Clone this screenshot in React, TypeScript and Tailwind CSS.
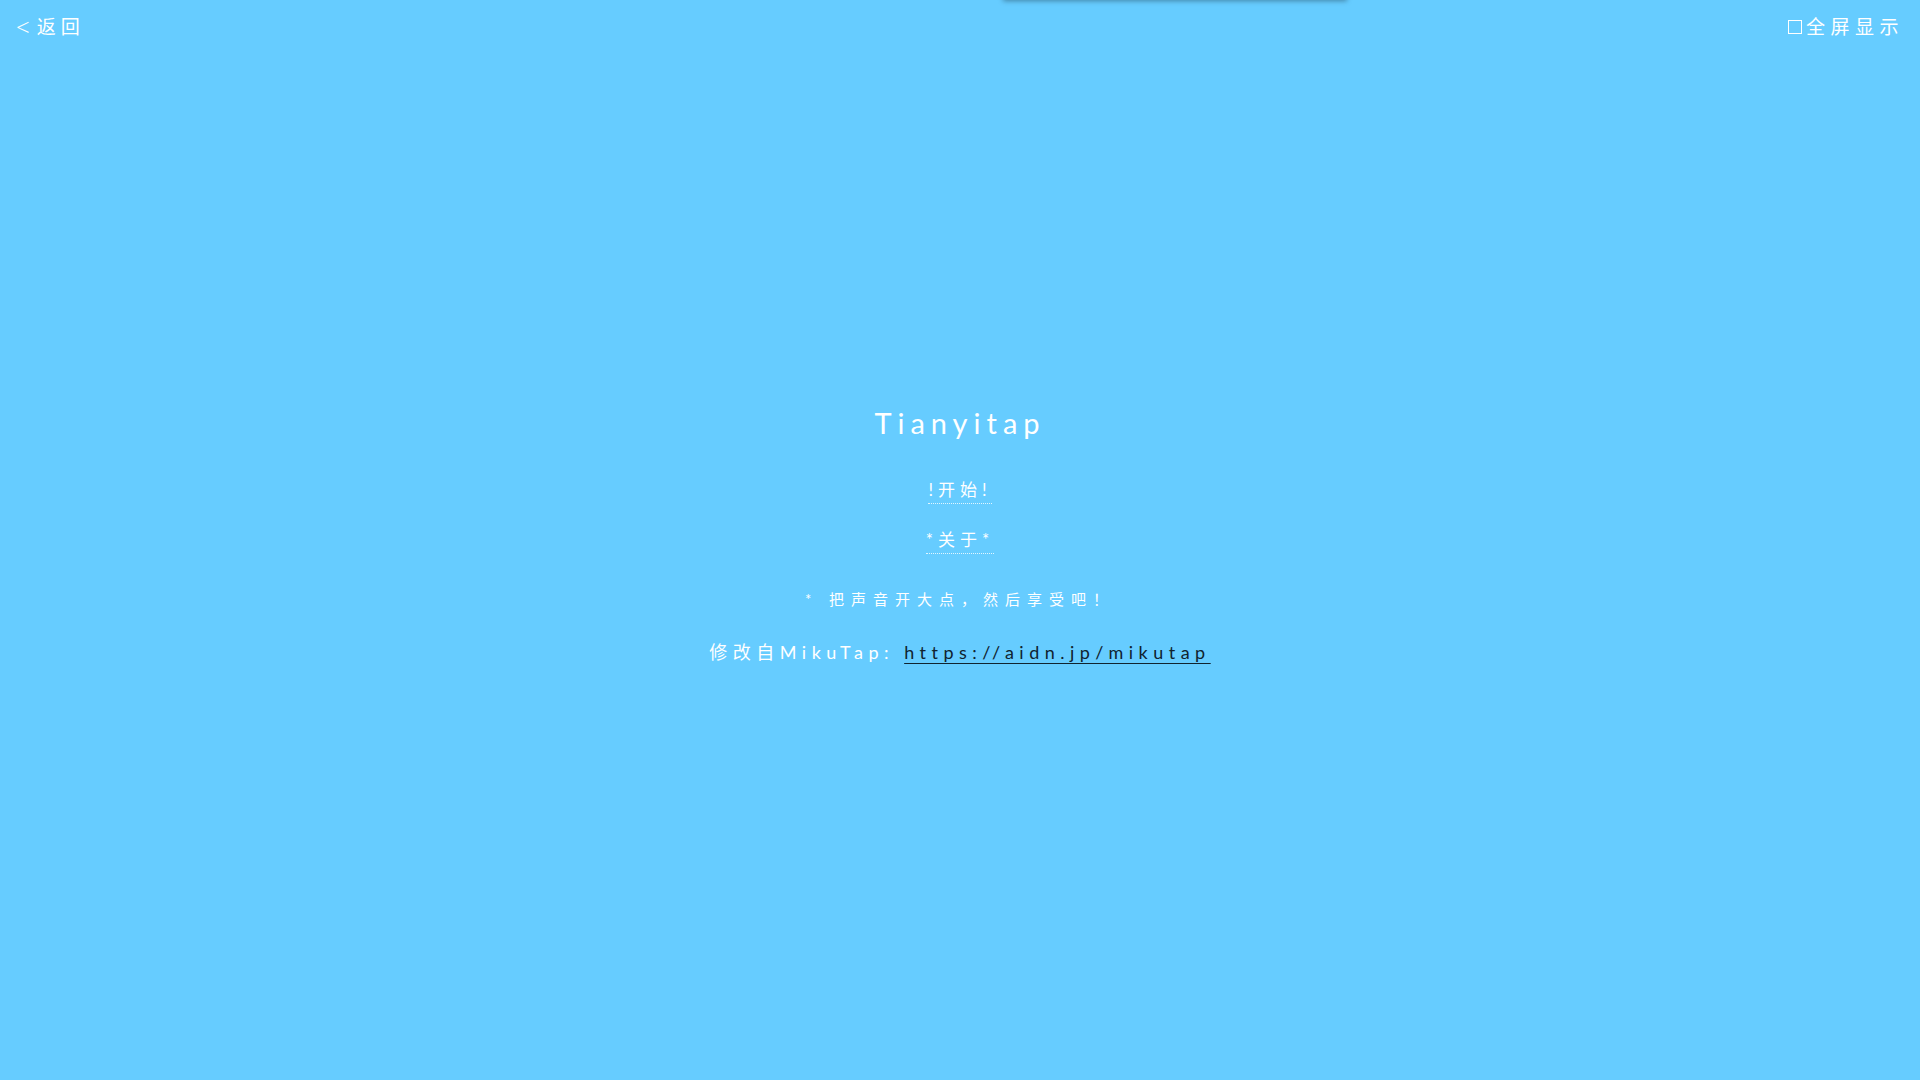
import React from "react";

export default function App() {
  return (
    <div className="relative flex h-screen w-full flex-col overflow-hidden bg-[#66ccff] font-['Lato','Noto_Sans_CJK_SC',sans-serif] text-white">
      {/* notification tray parked above the viewport, only its shadow shows */}
      <div className="absolute -top-[40px] left-[1003px] h-[40px] w-[344px] bg-[#66ccff] shadow-[0_1px_5px_rgba(0,0,0,0.35)]" />

      <header className="flex h-[54px] shrink-0 items-center justify-between px-4 text-[19px] tracking-[5px]">
        <a href="#" className="flex items-center">
          <span className="mr-[7px] font-['Open_Sans',sans-serif] text-[24px] font-light leading-none tracking-normal">
            &lt;
          </span>
          <span>返回</span>
        </a>
        <label className="flex items-center gap-[4px]">
          <span className="inline-block h-[14px] w-[14px] border border-white" />
          <span className="tracking-[5.5px]">全屏显示</span>
        </label>
      </header>

      <main className="flex flex-1 flex-col items-center justify-center pb-[66px]">
        <h1 className="text-[29px] leading-[40px] tracking-[6px]">Tianyitap</h1>

        <button className="mt-[34px] border-b border-dotted border-white/80 text-[17px] leading-[26px] tracking-[5px]">
          !开始!
        </button>
        <button className="mt-[23px] border-b border-dotted border-white/80 text-[17px] leading-[26px] tracking-[5px]">
          *关于*
        </button>

        <p className="mt-[33px] text-[15px] leading-[24px] tracking-[7px]">
          * 把声音开大点，然后享受吧！
        </p>

        <p className="mt-[27px] text-[18px] leading-[28px] tracking-[5.5px]">
          修改自MikuTap:{" "}
          <a href="#" className="text-[#10232f] underline underline-offset-[4px]">
            https://aidn.jp/mikutap
          </a>
        </p>
      </main>
    </div>
  );
}
